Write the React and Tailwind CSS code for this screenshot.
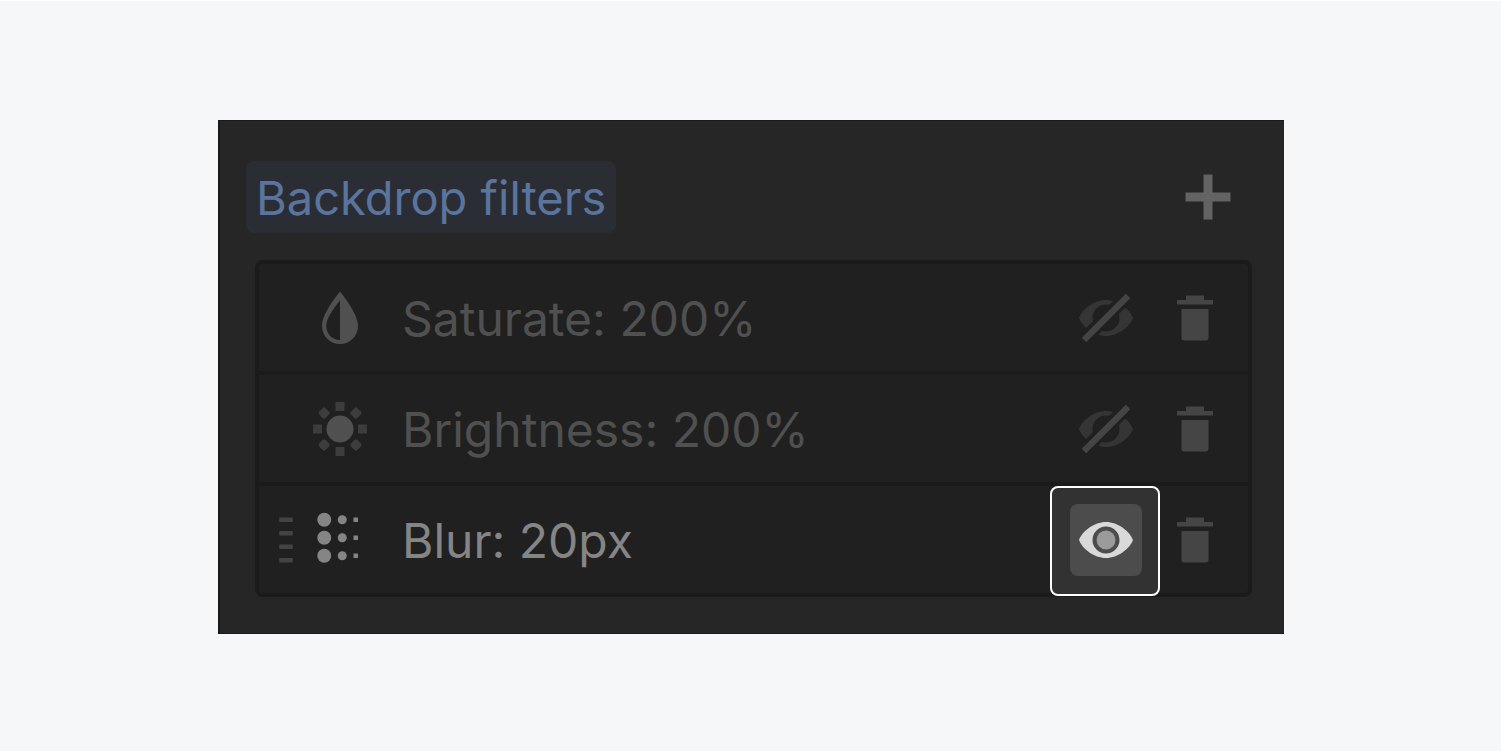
import { useId } from "react";

function DropIcon() {
  return (
    <svg viewBox="0 0 16 16" className="size-[72px] shrink-0" fill="currentColor" aria-hidden="true">
      <path
        fillRule="evenodd"
        d="M8 2.1C8 2.1 4 6.9 4 9.7C4 12 5.8 13.8 8 13.8S12 12 12 9.7C12 6.9 8 2.1 8 2.1ZM8 4.1V12.9C6.3 12.9 4.95 11.5 4.95 9.7C4.95 8.1 6.5 5.9 8 4.1Z"
      />
    </svg>
  );
}

function SunIcon() {
  return (
    <svg viewBox="0 0 16 16" className="size-[72px] shrink-0" fill="currentColor" aria-hidden="true">
      <circle cx="8" cy="8" r="3" />
      <g className="text-[#3d3d3d]">
        {[0, 90, 180, 270].map((angle) => (
          <rect key={angle} x="7" y="2" width="2" height="2" transform={`rotate(${angle} 8 8)`} />
        ))}
        {[45, 135, 225, 315].map((angle) => (
          <rect key={angle} x="7" y="2" width="2" height="2" rx="0.4" transform={`rotate(${angle} 8 8)`} />
        ))}
      </g>
    </svg>
  );
}

function BlurIcon() {
  return (
    <svg viewBox="0 0 16 16" className="size-[72px] shrink-0" fill="currentColor" aria-hidden="true">
      {[3.5, 7.5, 11.5].map((y) => (
        <g key={y}>
          <circle cx="4.5" cy={y} r="1.55" />
          <circle cx="8.5" cy={y} r="1" />
          <rect x="11" y={y - 0.5} width="1" height="1" />
        </g>
      ))}
    </svg>
  );
}

function GripIcon() {
  return (
    <svg viewBox="0 0 3 16" className="h-[72px] w-[14px]" fill="currentColor" aria-hidden="true">
      {[3, 6, 9, 12].map((y) => (
        <rect key={y} x="0" y={y} width="3" height="1" />
      ))}
    </svg>
  );
}

function EyeIcon() {
  return (
    <svg viewBox="0 0 16 16" className="size-[72px]" aria-hidden="true">
      <path
        fill="#d9d9d9"
        fillRule="evenodd"
        d="M2 8C2.7 6.1 5.3 4 8 4S13.3 6.1 14 8C13.3 9.9 10.7 12 8 12S2.7 9.9 2 8ZM8 5A3 3 0 1 0 8 11A3 3 0 1 0 8 5Z"
      />
      <circle cx="8" cy="8" r="2.1" fill="#9b9b9b" />
    </svg>
  );
}

function EyeOffIcon() {
  const clip = useId();
  return (
    <svg viewBox="0 0 16 16" className="size-[72px]" aria-hidden="true">
      <clipPath id={clip}>
        <path d="M0 0H13.8L0 13.8ZM16 16V2L2 16Z" />
      </clipPath>
      <path
        fill="#353535"
        fillRule="evenodd"
        clipPath={`url(#${clip})`}
        d="M2 8C2.7 6.1 5.3 4 8 4S13.3 6.1 14 8C13.3 9.9 10.7 12 8 12S2.7 9.9 2 8ZM8 5A3 3 0 1 0 8 11A3 3 0 1 0 8 5Z"
      />
      <path d="M3.1 12.9L12.9 3.1" fill="none" stroke="#444444" strokeWidth="1.4" />
    </svg>
  );
}

function TrashIcon() {
  return (
    <svg viewBox="0 0 16 16" className="size-[72px]" fill="#454545" aria-hidden="true">
      <path d="M6 3H10V4H12V5H4V4H6ZM5 6H11V12.4Q11 13 10.4 13H5.6Q5 13 5 12.4Z" />
    </svg>
  );
}

const filters = [
  { label: "Saturate: 200%", Icon: DropIcon, visible: false },
  { label: "Brightness: 200%", Icon: SunIcon, visible: false },
  { label: "Blur: 20px", Icon: BlurIcon, visible: true },
];

function FilterRow({ label, Icon, visible }) {
  return (
    <li className={`flex items-center pt-[18px] pr-[17px] pb-[17px] ${visible ? "text-[#858585]" : "text-[#505050]"}`}>
      <div className="w-[45px] shrink-0 pl-5 text-[#434343]">{visible && <GripIcon />}</div>
      <Icon />
      <span className="ml-[26px] grow pt-0.5 text-[48px] leading-[70px] whitespace-nowrap">{label}</span>
      <div className="flex shrink-0 items-center gap-[17px]">
        {visible ? (
          <div className="relative size-[72px]">
            <div className="absolute -top-[18px] -left-5 size-[110px] rounded-lg border-2 border-white bg-[#323232]" />
            <button type="button" aria-label="Hide filter" className="relative block size-[72px] rounded-lg bg-[#4c4c4c]">
              <EyeIcon />
            </button>
          </div>
        ) : (
          <button type="button" aria-label="Show filter" className="block size-[72px]">
            <EyeOffIcon />
          </button>
        )}
        <button type="button" aria-label="Delete filter" className="block size-[72px]">
          <TrashIcon />
        </button>
      </div>
    </li>
  );
}

export default function App() {
  return (
    <main className="min-h-screen border-t border-white bg-[#f5f7f9] pt-[119px] pr-[217px] pb-[117px] pl-[218px] font-['Inter',sans-serif]">
      <section className="border-y border-l-2 border-[#1a1a1a] bg-[#262626] pt-10 pb-9">
        <header className="flex items-center justify-between pr-10 pl-[26px]">
          <h2 className="rounded-lg bg-[#2a2e34] px-[10px] pt-0.5 text-[47px] leading-[70px] whitespace-nowrap text-[#5a749d]">
            Backdrop filters
          </h2>
          <button type="button" aria-label="Add filter" className="block size-[72px]">
            <svg viewBox="0 0 16 16" className="size-[72px]" fill="#636363" aria-hidden="true">
              <path d="M7 3H9V7H13V9H9V13H7V9H3V7H7Z" />
            </svg>
          </button>
        </header>
        <ul className="mt-[27px] mr-8 ml-[35px] divide-y-4 divide-[#1b1b1b] rounded-lg border-4 border-[#1b1b1b] bg-[#202020]">
          {filters.map((filter) => (
            <FilterRow key={filter.label} {...filter} />
          ))}
        </ul>
      </section>
    </main>
  );
}
